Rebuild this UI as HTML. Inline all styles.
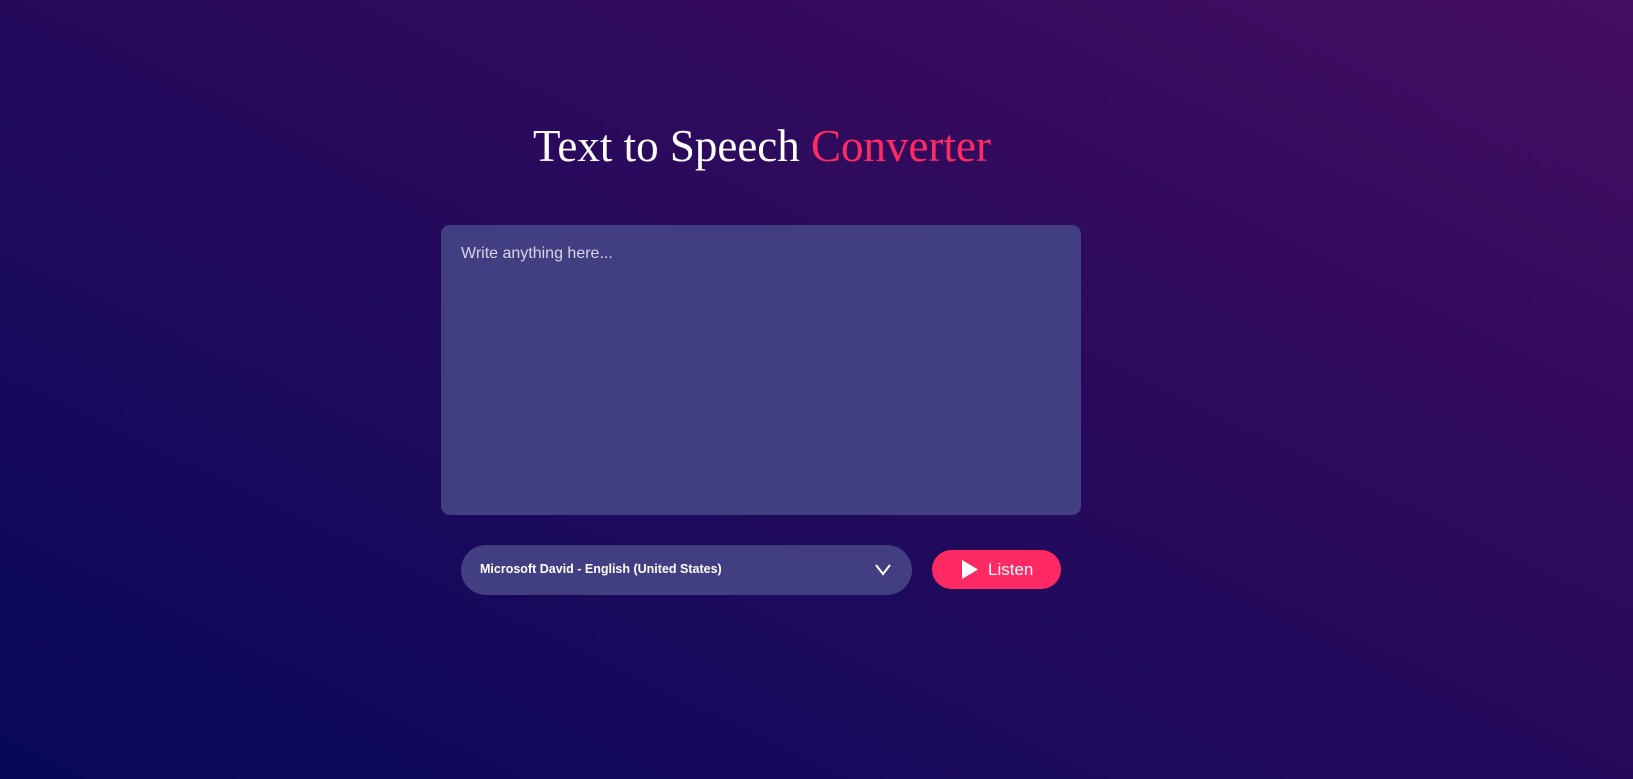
<!DOCTYPE html>
<html><head><meta charset="utf-8"><style>
html,body{margin:0;height:779px;width:1633px;overflow:hidden}
body{background:linear-gradient(to top right,#07085a 0%,#1f0a5c 40%,#340b5d 75%,#450f62 100%);font-family:"Liberation Sans",sans-serif;position:relative}
h1{position:absolute;top:120px;left:533px;white-space:nowrap;margin:0;font:400 45px "Liberation Serif",serif;color:#fff}
h1 span{color:#ff2a64}
.ta{position:absolute;left:441px;top:225px;width:640px;height:290px;background:#413e82;border-radius:9px}
.ta div{position:absolute;left:20px;top:20px;color:#d8d6e8;font-size:16px}
.sel{position:absolute;left:461px;top:545px;width:451px;height:50px;background:#413e82;border-radius:25px}
.sel div{position:absolute;left:19px;top:17px;color:#fff;font-size:12.5px;font-weight:bold}
.sel svg{position:absolute;left:414px;top:18px}
.btn{position:absolute;left:932px;top:550px;width:129px;height:39px;background:#ff2a64;border-radius:20px}
.btn div{position:absolute;left:56px;top:10px;color:#fff;font-size:17px}
.btn svg{position:absolute;left:30px;top:10px}
</style></head><body>
<h1>Text to Speech <span>Converter</span></h1>
<div class="ta"><div>Write anything here...</div></div>
<div class="sel"><div>Microsoft David - English (United States)</div><svg width="16" height="14" viewBox="0 0 16 14"><path d="M1 2L8 11L15 2" fill="none" stroke="#fff" stroke-width="2"/></svg></div>
<div class="btn"><svg width="16" height="19" viewBox="0 0 16 19"><path d="M0 0L16 9.5L0 19Z" fill="#fff"/></svg><div>Listen</div></div>
</body></html>
